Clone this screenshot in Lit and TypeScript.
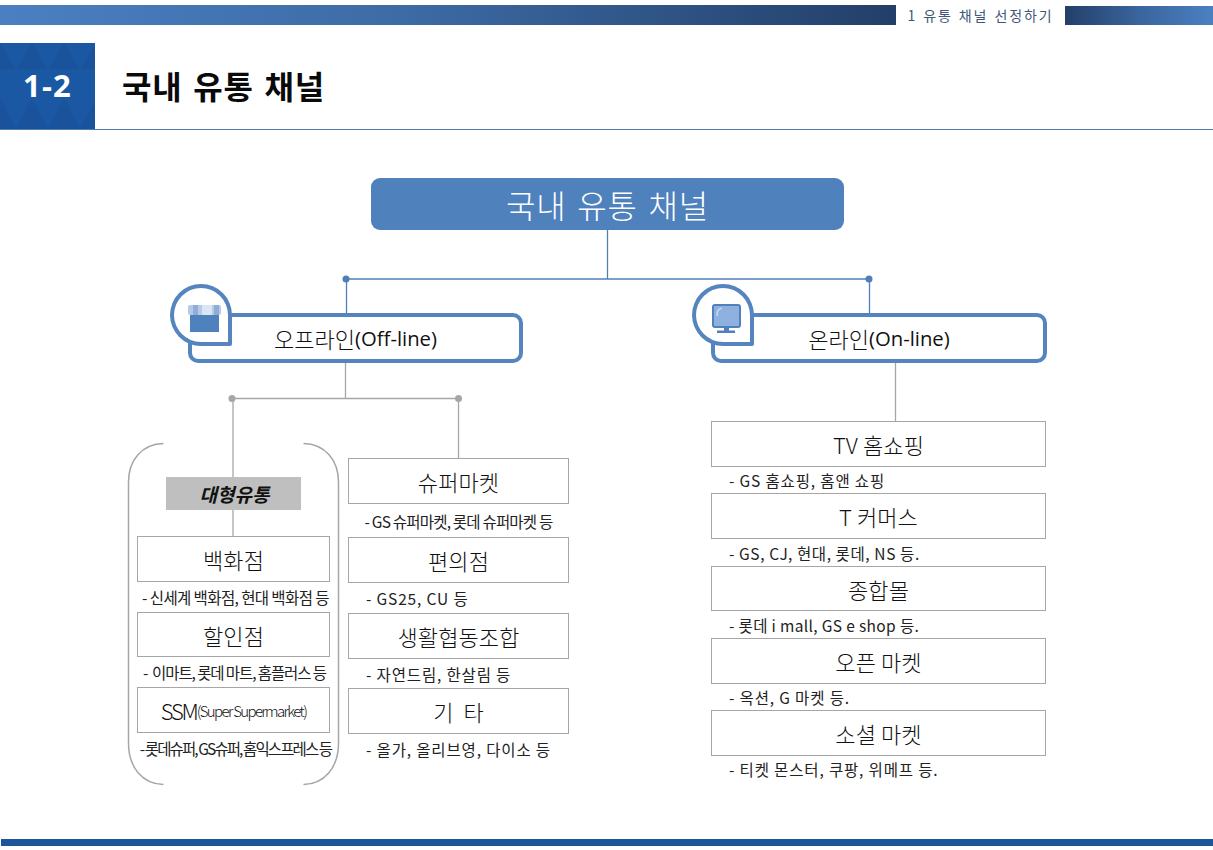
import { LitElement, html, css, svg } from "lit";
import { customElement } from "lit/decorators.js";

type Item = { title: string; cap: string; h: number; capH: number; capCls?: string; titleCls?: string; extra?: string };

const left: Item[] = [
  { title: "백화점", cap: "- 신세계 백화점, 현대 백화점 등", h: 46, capH: 30, capCls: "tight shift" },
  { title: "할인점", cap: "-  이마트, 롯데 마트, 홈플러스 등", h: 45, capH: 30, capCls: "tight2" },
  { title: "SSM", extra: "(Super Supermarket)", cap: "- 롯데슈퍼, GS슈퍼, 홈익스프레스 등", h: 46, capH: 30, capCls: "tighter", titleCls: "ssm" },
];
const mid: Item[] = [
  { title: "슈퍼마켓", cap: "- GS 슈퍼마켓, 롯데 슈퍼마켓 등", h: 46, capH: 33, capCls: "tight3" },
  { title: "편의점", cap: "- GS25, CU 등", h: 46, capH: 30 },
  { title: "생활협동조합", cap: "- 자연드림, 한살림 등", h: 46, capH: 29 },
  { title: "기  타", cap: "- 올가, 올리브영, 다이소 등", h: 46, capH: 30 },
];
const right: Item[] = [
  { title: "TV 홈쇼핑", cap: "- GS 홈쇼핑, 홈앤 쇼핑", h: 46, capH: 26 },
  { title: "T 커머스", cap: "- GS, CJ, 현대, 롯데, NS 등.", h: 46, capH: 27, capCls: "narrow" },
  { title: "종합몰", cap: "- 롯데 i mall, GS e shop 등.", h: 45, capH: 27, capCls: "narrow2" },
  { title: "오픈 마켓", cap: "- 옥션, G 마켓 등.", h: 46, capH: 26 },
  { title: "소셜 마켓", cap: "- 티켓 몬스터, 쿠팡, 위메프 등.", h: 46, capH: 26 },
];

const Y = 130;

@customElement("app-root")
export class AppRoot extends LitElement {
  static styles = css`
    :host {
      display: block;
      width: 1213px;
      height: 850px;
      overflow: hidden;
      background: #fff;
      font-family: "Noto Sans CJK KR", "Noto Sans", sans-serif;
      color: #111;
    }
    .top { display: flex; padding-top: 5px; height: 20px; }
    .top .l { flex: 0 0 896px; background: linear-gradient(90deg, #4a80c2 0%, #3d6ba5 45%, #233f69 100%); }
    .top .c {
      flex: 0 0 169px; font-size: 14px; line-height: 20px; color: #3f5878;
      text-align: center; letter-spacing: 1.9px; word-spacing: 1px; white-space: nowrap;
    }
    .top .r { flex: 1; margin-top: 1px; background: linear-gradient(90deg, #233f69 0%, #3a659e 50%, #4a80c2 100%); }
    .head {
      display: flex; align-items: center; margin-top: 18px; height: 86px;
      border-bottom: 1px solid #4f7cae;
    }
    .badge {
      position: relative; width: 95px; height: 86px; flex: none;
      display: flex; align-items: center; justify-content: center;
      background: #1b58a3; color: #fff; font: 700 31px "Open Sans", sans-serif; letter-spacing: 1.2px;
    }
    .badge svg { position: absolute; inset: 0; }
    .badge span { position: relative; margin-bottom: 3px; }
    h1 { margin: 0 0 3px 27px; font-size: 32px; font-weight: 700; color: #0a0a0a; letter-spacing: 0.7px; word-spacing: 3px; }
    .canvas { position: relative; height: 709px; }
    .wires { position: absolute; inset: 0; }
    .root {
      position: absolute; left: 371px; top: 48px; width: 473px; height: 52px;
      box-sizing: border-box; background: #4f81bd; border-radius: 9px; color: #fff;
      font-size: 32px; font-weight: 300; letter-spacing: 0.8px; word-spacing: 3px;
      display: flex; align-items: center; justify-content: center;
    }
    .chan {
      position: absolute; top: 183px; height: 50px; box-sizing: border-box;
      background: #fff; border: 4px solid #5585bf; border-radius: 10px;
      display: flex; align-items: center; justify-content: center;
      font-size: 22px; font-weight: 300; color: #111; padding-bottom: 1px;
    }
    .chan .en { font-family: "Open Sans", sans-serif; font-size: 20.3px; font-weight: 400; }
    .ic {
      position: absolute; top: 154px; width: 62px; height: 62px; box-sizing: border-box;
      background: #fff; border: 4px solid #5585bf; border-radius: 50% 50% 2px 50%;
      display: flex; align-items: center; justify-content: center; padding: 7px 0 0 7px;
    }
    .col { position: absolute; display: flex; flex-direction: column; }
    .box {
      box-sizing: border-box; border: 1px solid #a6a6a6; background: #fff;
      display: flex; align-items: center; justify-content: center;
      font-size: 22px; font-weight: 300; color: #111; letter-spacing: 0.1px; white-space: pre;
    }
    .ssm { letter-spacing: -2.2px; }
    .ssm small { font-size: 15px; letter-spacing: -1.65px; }
    .cap {
      display: flex; align-items: center; font-size: 15.5px; color: #222; white-space: pre;
      letter-spacing: 0.85px; padding-left: 18px;
    }
    .cap.narrow { letter-spacing: 0.6px; }
    .cap.narrow2 { letter-spacing: 0.35px; }
    .cap.tight { justify-content: center; padding-left: 0; letter-spacing: -0.6px; }
    .cap.tight.shift { padding-left: 4px; }
    .cap.tight2 { justify-content: center; padding-left: 2px; letter-spacing: -1.1px; }
    .cap.tight3 { justify-content: center; padding-left: 0; letter-spacing: -0.8px; }
    .cap.tighter { justify-content: center; padding-left: 4px; letter-spacing: -1.9px; }
    .tag {
      position: absolute; left: 166px; top: 347px; width: 135px; height: 33px;
      box-sizing: border-box; padding-left: 2px;
      background: #bfbfbf; display: flex; align-items: center; justify-content: center;
      font-size: 19px; font-weight: 700; font-style: italic; color: #111;
    }
    .foot { height: 7px; margin-left: 1px; background: #1a5699; }
  `;

  private wires() {
    const h = (x1: number, x2: number, y: number, c: string, w = 1.5) =>
      svg`<line x1=${x1} x2=${x2} y1=${y - Y} y2=${y - Y} stroke=${c} stroke-width=${w} />`;
    const v = (x: number, y1: number, y2: number, c: string, w = 1.3) =>
      svg`<line x1=${x} x2=${x} y1=${y1 - Y} y2=${y2 - Y} stroke=${c} stroke-width=${w} />`;
    const dot = (x: number, y: number, c: string) => svg`<circle cx=${x} cy=${y - Y} r="3.5" fill=${c} />`;
    const blue = "#4f7fb6";
    const gray = "#a6a6a6";
    return html`<svg class="wires" width="1213" height="709" viewBox="0 0 1213 709" fill="none">
      ${v(607.5, 230, 279, blue)} ${h(346, 869, 279, blue)}
      ${v(346.5, 279, 314, blue)} ${v(869.5, 279, 314, blue)}
      ${dot(346, 279, blue)} ${dot(869, 279, blue)}
      ${v(345.5, 363, 398.5, gray)} ${h(232, 458, 398.5, gray)}
      ${dot(232, 398.5, gray)} ${dot(458.5, 398.5, gray)}
      ${v(233, 398, 536, gray)} ${v(458.5, 398, 458, gray)} ${v(895.5, 363, 421, gray)}
      <path d="M163.5 313.5 C142 314 128.5 330 128.5 352 V613 C128.5 638 143 654 163.5 654.5" stroke=${gray} stroke-width="1.5" />
      <path d="M303.5 313.5 C325 314 338.5 330 338.5 352 V613 C338.5 638 324 654 303.5 654.5" stroke=${gray} stroke-width="1.5" />
    </svg>`;
  }

  private col(items: Item[], x: number, y: number, w: number) {
    return html`<div class="col" style="left:${x}px;top:${y - Y}px;width:${w}px">
      ${items.map(
        (i) => html`<div class="box ${i.titleCls ?? ""}" style="height:${i.h}px">${i.title}${i.extra ? html`<small>${i.extra}</small>` : ""}</div>
          <div class="cap ${i.capCls ?? ""}" style="height:${i.capH}px">${i.cap}</div>`
      )}
    </div>`;
  }

  private tris() {
    const out = [];
    for (let x = -16; x < 100; x += 32) {
      out.push(svg`<path d="M${x} 26 L${x + 16} 0 L${x + 32} 26 Z" fill="#1a529b" />`);
      out.push(svg`<path d="M${x} 86 L${x + 16} 56 L${x + 32} 86 Z" fill="#1a529b" />`);
    }
    return html`<svg width="95" height="86" viewBox="0 0 95 86">${out}</svg>`;
  }

  render() {
    return html`
      <div class="top"><div class="l"></div><div class="c">1 유통 채널 선정하기</div><div class="r"></div></div>
      <div class="head">
        <div class="badge">${this.tris()}<span>1-2</span></div>
        <h1>국내 유통 채널</h1>
      </div>
      <div class="canvas">
        ${this.wires()}
        <div class="root">국내 유통 채널</div>
        <div class="chan" style="left:188px;width:335px">오프라인<span class="en">(Off-line)</span></div>
        <div class="ic" style="left:170px">
          <svg width="33" height="27" viewBox="0 0 33 27">
            <rect x="2" y="10" width="29" height="17" fill="#4f81bd" />
            <rect x="0" y="0" width="33" height="10" rx="2" fill="#b4cae6" />
            <rect x="5" y="0" width="5" height="10" fill="#8fadd6" />
            <rect x="14" y="0" width="10" height="10" fill="#dbe6f4" />
            <rect x="26" y="0" width="5" height="10" fill="#8fadd6" />
          </svg>
        </div>
        <div class="chan" style="left:711px;width:336px">온라인<span class="en">(On-line)</span></div>
        <div class="ic" style="left:692px">
          <svg width="29" height="29" viewBox="0 0 29 29">
            <rect x="1" y="1" width="27" height="22" rx="2" fill="#8fb1e0" stroke="#4f81bd" stroke-width="2" />
            <path d="M5 12 C5 7 6 5 10 4" stroke="#d5e3f5" stroke-width="1.2" fill="none" />
            <rect x="12" y="23" width="5" height="4" fill="#4f81bd" />
            <rect x="5" y="26.5" width="18" height="2.5" fill="#4f81bd" />
          </svg>
        </div>
        <div class="tag">대형유통</div>
        ${this.col(left, 137, 536, 193)}
        ${this.col(mid, 348, 458, 221)}
        ${this.col(right, 711, 421, 335)}
      </div>
      <div class="foot"></div>
    `;
  }
}
